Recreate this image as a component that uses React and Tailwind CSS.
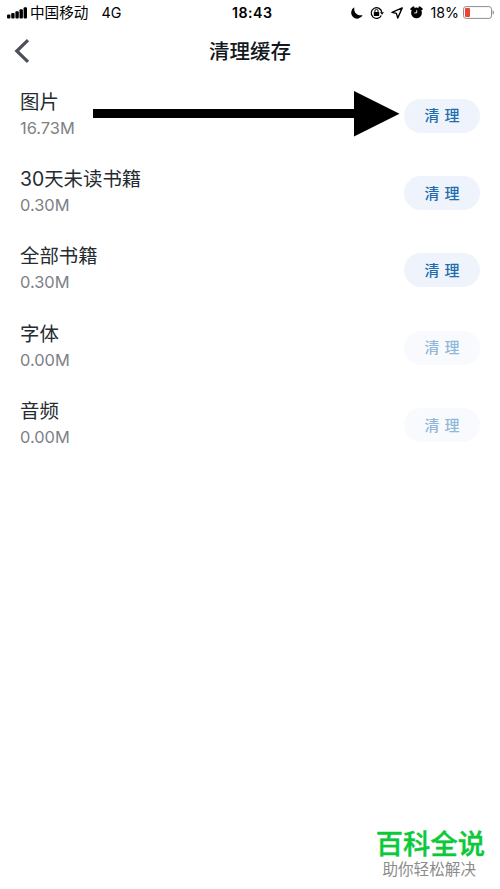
const items = [
  { name: '图片', size: '16.73M', active: true },
  { name: '30天未读书籍', size: '0.30M', active: true },
  { name: '全部书籍', size: '0.30M', active: true },
  { name: '字体', size: '0.00M', active: false },
  { name: '音频', size: '0.00M', active: false }
]

const SignalIcon = () => (
  <svg className="w-5 h-3 shrink-0" viewBox="0 0 20 12">
    <rect x="0" y="7.4" width="3.4" height="4.2" rx="1" />
    <rect x="4.2" y="6" width="3.4" height="5.6" rx="1" />
    <rect x="8.4" y="4.2" width="3.4" height="7.4" rx="1" />
    <rect x="12.5" y="2.2" width="3.4" height="9.4" rx="1" />
    <rect x="16.6" y="0.2" width="3.4" height="11.4" rx="1" />
  </svg>
)

const MoonIcon = () => (
  <svg className="w-3 h-3 shrink-0" viewBox="0 0 12 12">
    <path d="M3.4 0.3C2.4 5.2 6 9.2 11.6 8.2A6 6 0 1 1 3.4 0.3Z" />
  </svg>
)

const RotationLockIcon = () => (
  <svg className="w-[14px] h-[14px] shrink-0" viewBox="0 0 14 14">
    <path d="M11.3 9.4A5.3 5.3 0 1 1 11.8 6.4" fill="none" stroke="#000" strokeWidth="1.2" />
    <path d="M10 6.2H14L12 8.8Z" />
    <rect x="3.8" y="6" width="5.4" height="4" rx="0.6" />
    <path d="M4.9 6.4V5a1.6 1.6 0 0 1 3.2 0V6.4" fill="none" stroke="#000" strokeWidth="1" />
  </svg>
)

const LocationIcon = () => (
  <svg className="w-3 h-3 shrink-0" viewBox="0 0 12 12">
    <path d="M11.2 0.9L1 5.4L5.4 6.4L6.8 11Z" fill="none" stroke="#000" strokeWidth="1.4" strokeLinejoin="round" />
  </svg>
)

const AlarmIcon = () => (
  <svg className="w-[13px] h-[13px] shrink-0" viewBox="0 0 13 13">
    <circle cx="6.5" cy="6.9" r="5.4" />
    <path d="M1.5 3.1L3.3 1.6M11.5 3.1L9.7 1.6" stroke="#000" strokeWidth="2.4" strokeLinecap="round" />
    <path d="M4.2 6.9H6.7V4.2" fill="none" stroke="#fff" strokeWidth="0.9" />
  </svg>
)

const BatteryIcon = () => (
  <svg className="w-8 h-[13px] shrink-0" viewBox="0 0 32 13">
    <rect x="0.5" y="0.6" width="28" height="11.8" rx="2.6" fill="#fff" stroke="#8e8e8e" />
    <rect x="2" y="2.1" width="5" height="8.8" rx="1" fill="#ee4238" />
    <path d="M29.6 4.3Q31 4.8 31 6.5T29.6 8.7Z" fill="#8e8e8e" />
  </svg>
)

const StatusBar = () => (
  <div className="relative flex h-[25px] items-center justify-between pl-[7px] pr-[5px] text-sm text-black">
    <div className="flex items-center">
      <SignalIcon />
      <span className="ml-[3px] pt-[2px] text-[14.6px]">中国移动</span>
      <span className="ml-[13px] pt-px text-[14.3px]">4G</span>
    </div>
    <span className="absolute left-[232px] pt-px text-[14.2px] font-semibold tracking-[0.5px]">18:43</span>
    <div className="flex items-center">
      <MoonIcon />
      <span className="w-[7px]" />
      <RotationLockIcon />
      <span className="w-[7px]" />
      <LocationIcon />
      <span className="w-[7px]" />
      <AlarmIcon />
      <span className="ml-[8px] mr-[4px] pt-px text-[14.2px]">18%</span>
      <BatteryIcon />
    </div>
  </div>
)

const Header = () => (
  <header className="relative flex h-[52px] items-center justify-center">
    <button className="absolute left-[14px] top-[13px]">
      <svg className="w-4 h-[26px]" viewBox="0 0 16 26" fill="none" stroke="#4b5157" strokeWidth="3.2">
        <path d="M14 2.2L2.8 13L14 23.8" />
      </svg>
    </button>
    <h1 className="pt-[3px] text-[20.5px] font-medium text-[#14181d]">清理缓存</h1>
  </header>
)

const CacheRow = ({ item }) => (
  <li className="flex h-[77.3px] items-center justify-between">
    <div className="pb-px">
      <p className="text-[19.4px] leading-[27px] text-[#262b31]">{item.name}</p>
      <p className="text-[16.4px] leading-[24px] pb-[2px] text-[#7d8186]">{item.size}</p>
    </div>
    <button
      className={
        item.active
          ? 'h-[34px] w-[76px] rounded-full bg-[#eff3fb] pt-[2px] text-[15px] font-medium [word-spacing:1px] text-[#1d6cad]'
          : 'h-[34px] w-[76px] rounded-full bg-[#f9fafe] pt-[2px] text-[15px] font-medium [word-spacing:1px] text-[#8fb8d9]'
      }
    >
      清 理
    </button>
  </li>
)

export default function App() {
  return (
    <div className="relative flex h-[889px] w-[500px] flex-col overflow-hidden bg-white font-['Inter','Noto_Sans_CJK_SC',sans-serif]">
      <StatusBar />
      <Header />
      <ul className="px-5">
        {items.map((item) => (
          <CacheRow key={item.name} item={item} />
        ))}
      </ul>

      <svg className="absolute left-[93px] top-[91px] h-[46px] w-[307px]" viewBox="0 0 307 46">
        <path d="M0 18H261V0L306.500 22.700L261 45.500V27H0Z" />
      </svg>

      <footer className="mt-auto flex flex-col items-end pb-[9px]">
        <p className="mr-[15px] text-[27.3px] font-medium leading-[30px] text-[#0cc93a] [-webkit-text-stroke:0.4px_#0cc93a]">百科全说</p>
        <p className="mr-[24px] text-[15.6px] leading-[20px] text-[#8c8c8c]">助你轻松解决</p>
      </footer>
    </div>
  )
}
